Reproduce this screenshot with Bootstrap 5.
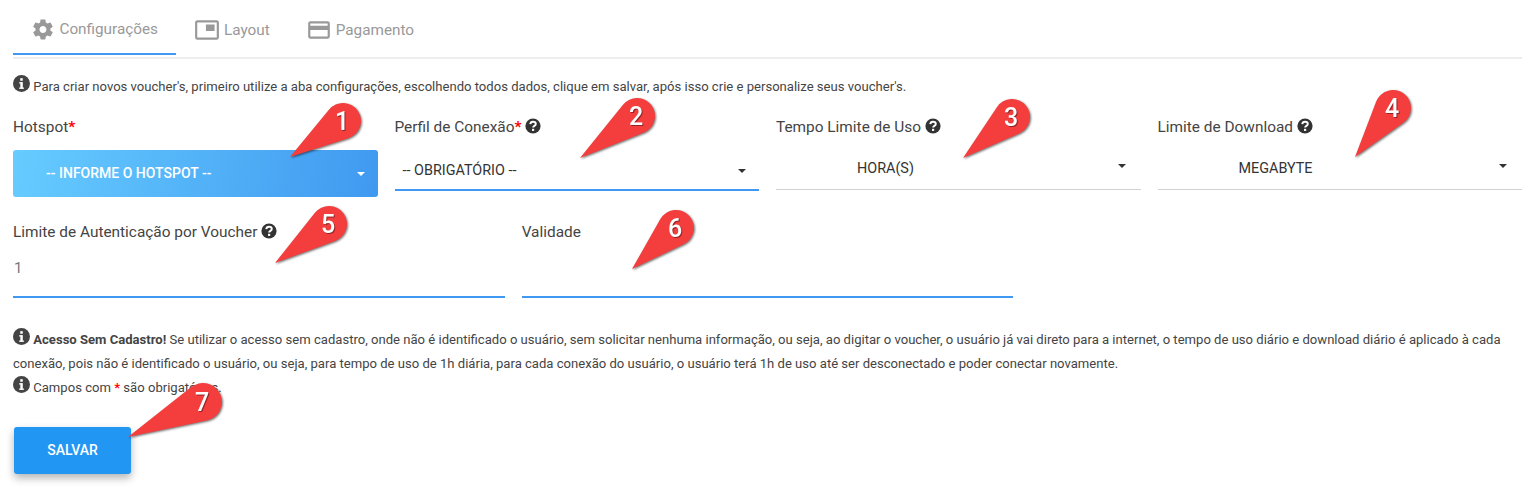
<!DOCTYPE html>
<html lang="pt-BR">
<head>
    <meta charset="UTF-8">
    <meta name="viewport" content="width=device-width, initial-scale=1.0">
    <title>Voucher - Configurações</title>
    <link href="https://cdn.jsdelivr.net/npm/bootstrap@5.3.2/dist/css/bootstrap.min.css" rel="stylesheet">
    <style>
        body {
            background-color: #fff;
            color: #3c4858;
            font-family: Roboto, "Liberation Sans", sans-serif;
            height: 493px;
            overflow: hidden;
        }
        .page-wrap {
            padding: 0 14px 0 13px;
        }
        .tab-bar {
            border-bottom: 2px solid #eee;
            padding-bottom: 2px;
            height: 59px;
        }
        .tab-item {
            display: flex;
            align-items: center;
            gap: 4px;
            height: 55px;
            color: #999;
            font-size: 15.3px;
            text-decoration: none;
            padding: 5px 18px 0 18px;
        }
        .tab-item.on {
            border-bottom: 2px solid #4099f0;
            width: 163px;
            gap: 5px;
            padding-left: 17.5px;
        }
        .tab-item svg {
            fill: #999;
        }
        .note {
            color: #444;
            font-size: 13.08px;
            line-height: 24px;
            margin: 0;
        }
        .note-top {
            margin-top: 16px;
        }
        .note-bottom {
            margin-top: 30px;
        }
        .note svg {
            vertical-align: -1px;
        }
        .req {
            color: #f00;
            font-weight: 700;
        }
        .field-row {
            --bs-gutter-x: 17px;
            margin-left: -8.5px;
            margin-right: -8.5px;
        }
        .first-row {
            margin-top: 18px;
        }
        .field-label {
            color: #444;
            font-size: 15.4px;
            line-height: 20px;
            margin-bottom: 0;
            display: block;
        }
        .field-label svg {
            vertical-align: -2px;
        }
        .hs-select {
            background: linear-gradient(100deg, #66ccff, #4099f0);
            border: 0;
            border-radius: 3px;
            color: #fff;
            font-size: 14px;
            font-weight: 500;
            height: 47px;
            padding: 0 13px 0 33px;
            margin-top: 13px;
            width: 100%;
        }
        .hs-select:hover, .hs-select:active {
            color: #fff;
        }
        .line-select {
            background: transparent;
            border: 0;
            border-radius: 0;
            color: #333;
            font-size: 14.4px;
            height: 40px;
            padding: 6px 13px 0 8px;
            width: 100%;
        }
        .line-blue {
            border-bottom: 2px solid #4099f0;
            margin-top: 11px;
            padding-bottom: 1px;
        }
        .pair {
            display: flex;
            margin-top: 12px;
        }
        .pair input {
            width: 76px;
            height: 41px;
            border: 0;
            border-bottom: 1px solid #d2d2d2;
            border-radius: 0;
            flex: none;
            margin-bottom: -1px;
        }
        .pair .line-select {
            border-bottom: 1px solid #d2d2d2;
            height: 41px;
            padding: 0 15px 0 5px;
        }
        .hs-select.dropdown-toggle::after, .line-select.dropdown-toggle::after {
            border-top-width: 4px;
            border-right-width: 4px;
            border-left-width: 4px;
            margin-left: 0;
        }
        .pair .line-select::after {
            margin-top: -6px;
        }
        .line-input {
            border: 0;
            border-bottom: 2px solid #4099f0;
            border-radius: 0;
            color: #777;
            font-size: 15px;
            height: 46px;
            padding: 0 1px 12px;
            margin-top: 10px;
            box-shadow: none;
        }
        .second-row {
            margin-top: 25px;
        }
        .save-btn {
            background-color: #2196f3;
            border: 0;
            border-radius: 3px;
            box-shadow: 0 4px 8px rgba(0, 0, 0, .3);
            color: #fff;
            font-size: 14px;
            font-weight: 500;
            width: 117px;
            height: 47px;
            margin: 27px 0 0 1px;
        }
        .save-btn:hover {
            background-color: #2196f3;
            color: #fff;
        }
        .pin-layer {
            position: absolute;
            top: 0;
            left: 0;
            width: 1536px;
            height: 493px;
            pointer-events: none;
        }
        .pin-layer path {
            fill: #f43d3d;
            filter: drop-shadow(1px 1px 1px rgba(0, 0, 0, .55));
        }
        .pin-layer text {
            fill: #fff;
            font-family: Roboto, "Liberation Sans", sans-serif;
            font-size: 25px;
            font-weight: 500;
            text-anchor: middle;
            filter: drop-shadow(1px 1px 0 rgba(0, 0, 0, .4));
        }
    </style>
</head>
<body>
    <svg width="0" height="0" class="d-block">
        <defs>
            <symbol id="ico-info" viewBox="0 0 16 16">
                <circle cx="8" cy="8" r="8" fill="#444"/>
                <rect x="6.9" y="6.8" width="2.3" height="6" fill="#fff"/>
                <rect x="5.8" y="6.8" width="3" height="1.2" fill="#fff"/>
                <rect x="5.8" y="11.8" width="4.5" height="1.2" fill="#fff"/>
                <rect x="6.8" y="3" width="2.4" height="2.4" fill="#fff"/>
            </symbol>
            <symbol id="ico-help" viewBox="0 0 16 16">
                <circle cx="8" cy="8" r="7.6" fill="#333"/>
                <path d="M5.2 6.2C5.4 4.5 6.6 3.7 8 3.7c1.6 0 2.8 1 2.8 2.3 0 1.9-2.7 1.9-2.7 3.6" fill="none" stroke="#fff" stroke-width="1.9"/>
                <rect x="7" y="10.8" width="2.2" height="2.1" fill="#fff"/>
            </symbol>
        </defs>
    </svg>

    <div class="page-wrap">
        <!-- Abas -->
        <nav class="tab-bar d-flex">
            <a href="#" class="tab-item on">
                <svg width="25" height="25" viewBox="0 0 24 24"><path d="M19.43 12.98c.04-.32.07-.64.07-.98s-.03-.66-.07-.98l2.11-1.65c.19-.15.24-.42.12-.64l-2-3.46c-.12-.22-.39-.3-.61-.22l-2.49 1c-.52-.4-1.08-.73-1.69-.98l-.38-2.65C14.46 2.18 14.25 2 14 2h-4c-.25 0-.46.18-.49.42l-.38 2.65c-.61.25-1.17.59-1.69.98l-2.49-1c-.23-.09-.49 0-.61.22l-2 3.46c-.13.22-.07.49.12.64l2.11 1.65c-.04.32-.07.65-.07.98s.03.66.07.98l-2.11 1.65c-.19.15-.24.42-.12.64l2 3.46c.12.22.39.3.61.22l2.49-1c.52.4 1.08.73 1.69.98l.38 2.65c.03.24.24.42.49.42h4c.25 0 .46-.18.49-.42l.38-2.65c.61-.25 1.17-.59 1.69-.98l2.49 1c.23.09.49 0 .61-.22l2-3.46c.12-.22.07-.49-.12-.64l-2.11-1.65zM12 15.5c-1.93 0-3.5-1.57-3.5-3.5s1.57-3.5 3.5-3.5 3.5 1.57 3.5 3.5-1.57 3.5-3.5 3.5z"/></svg>
                Configurações
            </a>
            <a href="#" class="tab-item">
                <svg width="26" height="26" viewBox="0 0 24 24"><path d="M19 7h-8v6h8V7zm2-4H3c-1.1 0-2 .9-2 2v14c0 1.1.9 1.98 2 1.98h18c1.1 0 2-.88 2-1.98V5c0-1.1-.9-2-2-2zm0 16.01H3V4.98h18v14.03z"/></svg>
                Layout
            </a>
            <a href="#" class="tab-item">
                <svg width="26" height="26" viewBox="0 0 24 24"><path d="M20 4H4c-1.11 0-1.99.89-1.99 2L2 18c0 1.11.89 2 2 2h16c1.11 0 2-.89 2-2V6c0-1.11-.89-2-2-2zm0 14H4v-6h16v6zm0-10H4V6h16v2z"/></svg>
                Pagamento
            </a>
        </nav>

        <p class="note note-top"><svg width="17" height="17"><use href="#ico-info"/></svg> Para criar novos voucher's, primeiro utilize a aba configurações, escolhendo todos dados, clique em salvar, após isso crie e personalize seus voucher's.</p>

        <!-- Primeira linha de campos -->
        <div class="row field-row first-row">
            <div class="col-3">
                <label class="field-label">Hotspot<span class="req">*</span></label>
                <button type="button" class="btn hs-select dropdown-toggle d-flex align-items-center justify-content-between">-- INFORME O HOTSPOT --</button>
            </div>
            <div class="col-3">
                <label class="field-label">Perfil de Conexão<span class="req">*</span> <svg width="16" height="16"><use href="#ico-help"/></svg></label>
                <div class="line-blue">
                    <button type="button" class="btn line-select dropdown-toggle d-flex align-items-center justify-content-between">-- OBRIGATÓRIO --</button>
                </div>
            </div>
            <div class="col-3">
                <label class="field-label">Tempo Limite de Uso <svg width="16" height="16"><use href="#ico-help"/></svg></label>
                <div class="pair">
                    <input type="text" class="form-control">
                    <button type="button" class="btn line-select dropdown-toggle d-flex align-items-center justify-content-between">HORA(S)</button>
                </div>
            </div>
            <div class="col-3">
                <label class="field-label">Limite de Download <svg width="16" height="16"><use href="#ico-help"/></svg></label>
                <div class="pair">
                    <input type="text" class="form-control">
                    <button type="button" class="btn line-select dropdown-toggle d-flex align-items-center justify-content-between">MEGABYTE</button>
                </div>
            </div>
        </div>

        <!-- Segunda linha de campos -->
        <div class="row field-row second-row">
            <div class="col-4">
                <label class="field-label">Limite de Autenticação por Voucher <svg width="16" height="16"><use href="#ico-help"/></svg></label>
                <input type="text" class="form-control line-input" value="1">
            </div>
            <div class="col-4">
                <label class="field-label">Validade</label>
                <input type="text" class="form-control line-input">
            </div>
        </div>

        <p class="note note-bottom"><svg width="17" height="17"><use href="#ico-info"/></svg> <strong>Acesso Sem Cadastro!</strong> Se utilizar o acesso sem cadastro, onde não é identificado o usuário, sem solicitar nenhuma informação, ou seja, ao digitar o voucher, o usuário já vai direto para a internet, o tempo de uso diário e download diário é aplicado à cada conexão, pois não é identificado o usuário, ou seja, para tempo de uso de 1h diária, para cada conexão do usuário, o usuário terá 1h de uso até ser desconectado e poder conectar novamente.<br>
        <svg width="17" height="17"><use href="#ico-info"/></svg> Campos com <span class="req">*</span> são obrigatórios.</p>

        <button type="button" class="btn save-btn">SALVAR</button>
    </div>

    <!-- Marcadores numerados por cima da tela -->
    <svg class="pin-layer" id="pins" xmlns="http://www.w3.org/2000/svg"></svg>

    <script src="https://cdn.jsdelivr.net/npm/bootstrap@5.3.2/dist/js/bootstrap.bundle.min.js"></script>
    <script>
        const pins = [
            { n: 1, cx: 343, cy: 121, r: 18, tx: 290, ty: 157 },
            { n: 2, cx: 637, cy: 116, r: 18, tx: 580, ty: 158 },
            { n: 3, cx: 1012, cy: 117, r: 18, tx: 963, ty: 158 },
            { n: 4, cx: 1393, cy: 108, r: 18, tx: 1355, ty: 157 },
            { n: 5, cx: 329, cy: 224, r: 18, tx: 275, ty: 263 },
            { n: 6, cx: 676, cy: 228, r: 18, tx: 632, ty: 269 },
            { n: 7, cx: 203, cy: 402, r: 19, tx: 128, ty: 437 }
        ];
        const layer = document.getElementById('pins');
        let html = '';
        pins.forEach(p => {
            // pontos de tangência entre a ponta e o círculo
            const dx = p.cx - p.tx, dy = p.cy - p.ty;
            const d = Math.hypot(dx, dy);
            const base = Math.atan2(-dy, -dx);
            const off = Math.acos(p.r / d);
            const a = [base - off, base + off].map(t => [p.cx + p.r * Math.cos(t), p.cy + p.r * Math.sin(t)]);
            html += `<path d="M${p.tx} ${p.ty}L${a[1][0]} ${a[1][1]}A${p.r} ${p.r} 0 1 1 ${a[0][0]} ${a[0][1]}Z"/>`;
            html += `<text x="${p.cx - 1}" y="${p.cy + 9}">${p.n}</text>`;
        });
        layer.innerHTML = html;
    </script>
</body>
</html>
